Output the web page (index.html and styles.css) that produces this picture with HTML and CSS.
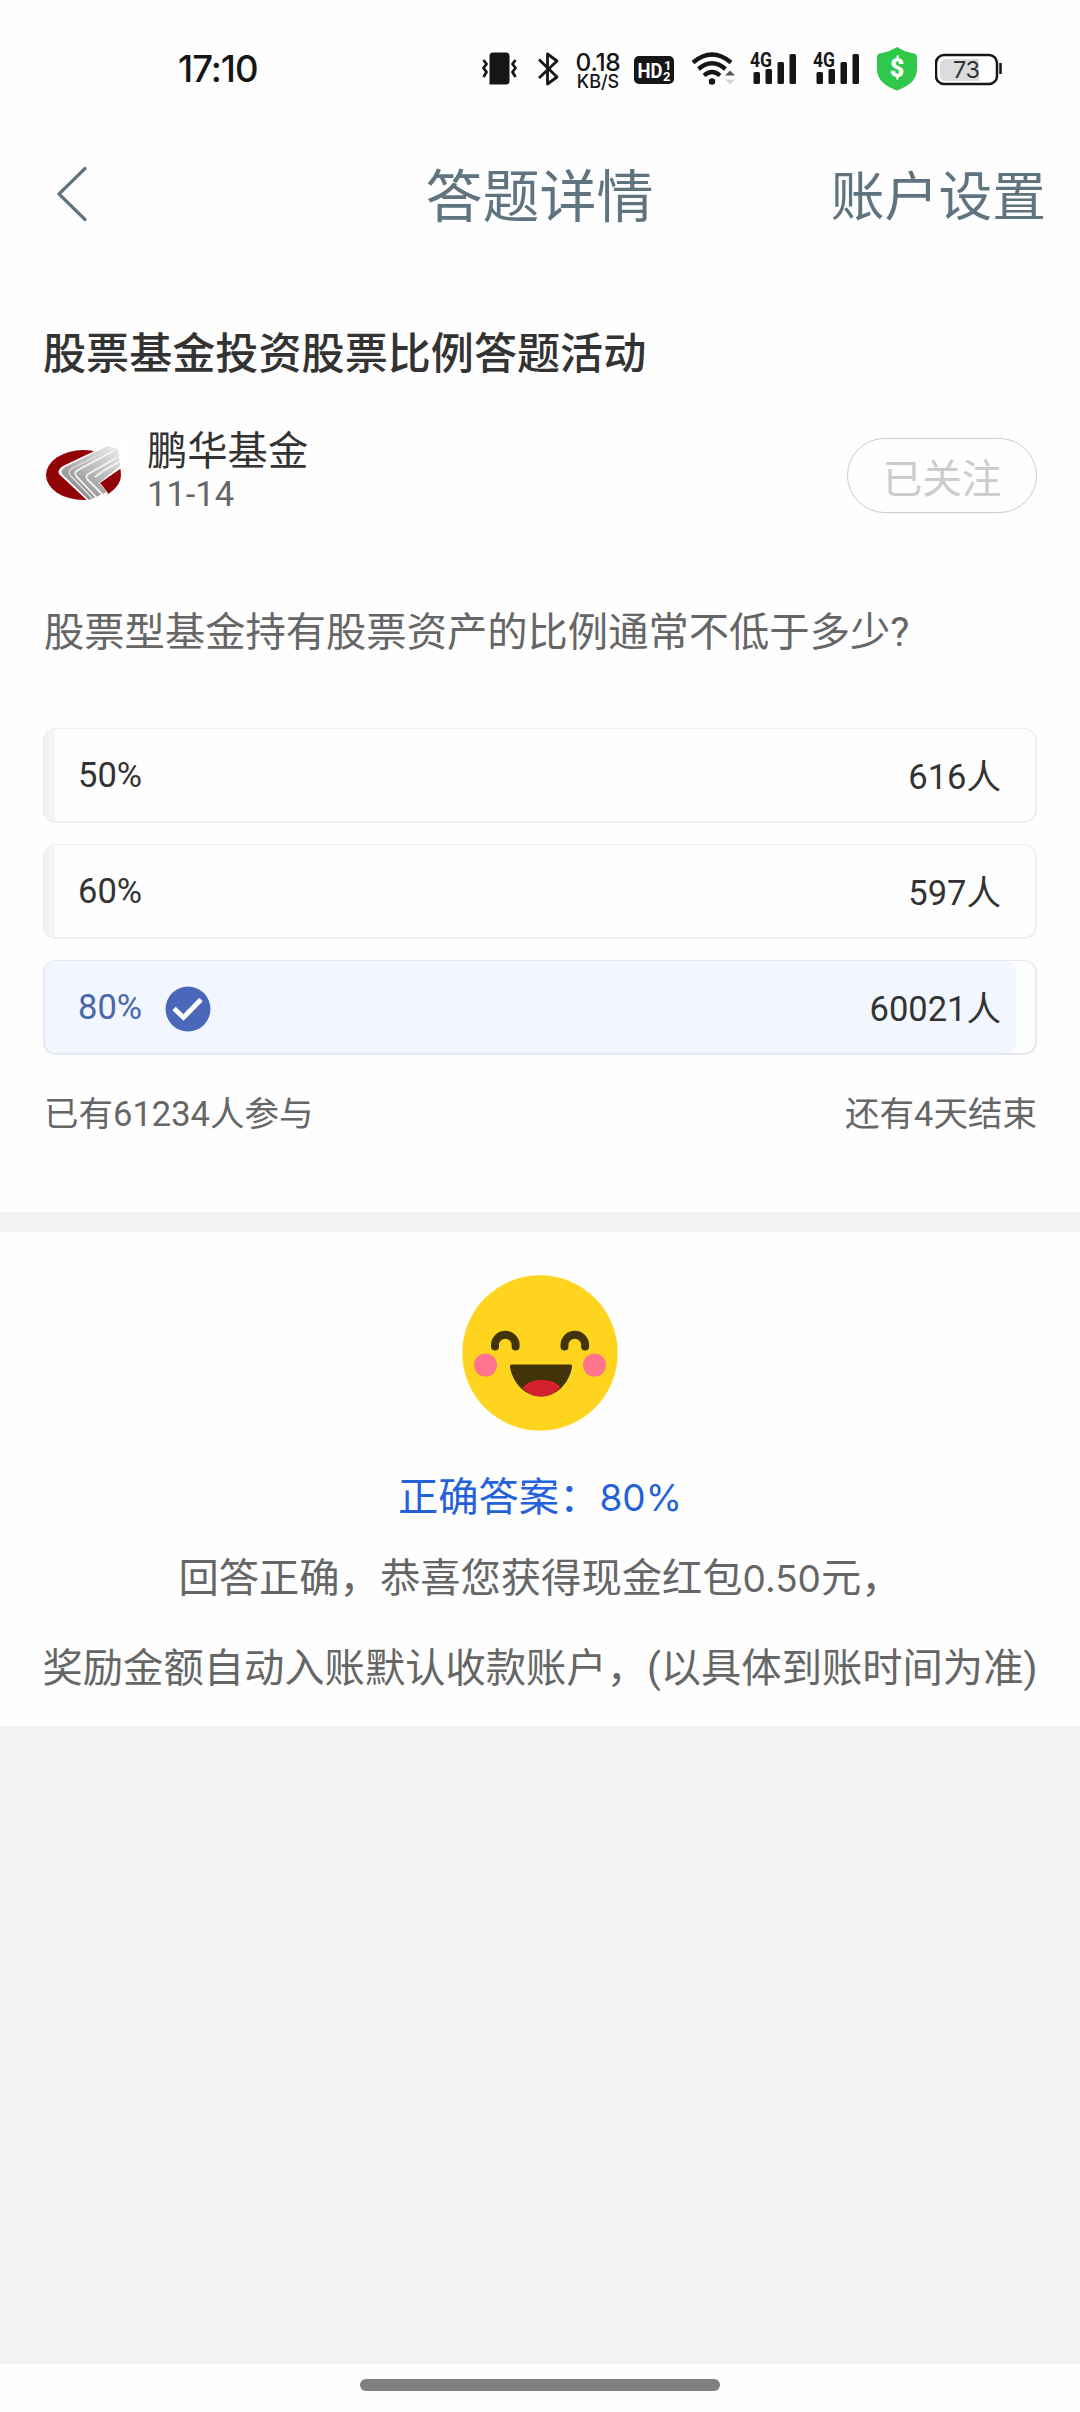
FILE: index.html
```html
<!DOCTYPE html>
<html lang="zh-CN">
<head>
<meta charset="utf-8">
<title>答题详情</title>
<link rel="stylesheet" href="styles.css">
</head>
<body>
<div class="screen">
  <header class="status">
    <span class="time">17:10</span>
    <div class="status-icons">
      <svg class="i-vibrate" width="36" height="44" viewBox="0 0 36 44"><path d="M11 5.500h13q3.500 0 3.500 3.500v25q0 3.500-3.500 3.500H7.500V9q0-3.500 3.500-3.500z" fill="#161616"/><path d="M1.500 13l3 4-3 4 3 4-3 5M33.500 13l-3 4 3 4-3 4 3 5" fill="none" stroke="#161616" stroke-width="2.800" stroke-linejoin="round"/></svg>
      <svg class="i-bt" width="22" height="44" viewBox="0 0 22 44"><path d="M1 12.500L19 30 9.500 37V7L19 14 1 31" fill="none" stroke="#161616" stroke-width="2.800" stroke-linejoin="round"/></svg>
      <div class="speed"><span class="speed-num">0.18</span><span class="speed-unit">KB/S</span></div>
      <svg class="i-hd" width="40" height="44" viewBox="0 0 40 44"><rect y="9" width="40" height="28" rx="5" fill="#161616"/><g fill="#fff" font-family="Roboto, sans-serif" font-weight="700"><text x="3.500" y="31" font-size="21" textLength="25" lengthAdjust="spacingAndGlyphs">HD</text><text x="30" y="23" font-size="13">1</text><text x="29" y="34" font-size="13">2</text></g></svg>
      <svg class="i-wifi" width="46" height="44" viewBox="0 0 46 44"><g fill="none" stroke="#161616" stroke-width="4.300"><path d="M2 15.500Q21 -.500 40 15.500"/><path d="M7.500 22Q21 10.500 34.500 22"/><path d="M13 28.500Q21 21.500 29 28.500"/></g><circle cx="21" cy="34.500" r="3.200" fill="#161616"/><path d="M34 28.500l5-5 5 5z" fill="#555"/><path d="M34 32.500l5 5 5-5z" fill="#d5d5d5"/></svg>
      <svg class="i-sig" width="47" height="44" viewBox="0 0 47 44"><g fill="#161616"><text x="0" y="19.500" font-family="Roboto, sans-serif" font-weight="700" font-size="20" textLength="22" lengthAdjust="spacingAndGlyphs">4G</text><rect x="3.500" y="25" width="6.500" height="12" rx="1.500"/><rect x="15.500" y="22" width="6.500" height="15" rx="1.500"/><rect x="27.500" y="15" width="6.500" height="22" rx="1.500"/><rect x="39.500" y="7" width="6.500" height="30" rx="1.500"/></g></svg>
      <svg class="i-sig2" width="47" height="44" viewBox="0 0 47 44"><g fill="#161616"><text x="0" y="19.500" font-family="Roboto, sans-serif" font-weight="700" font-size="20" textLength="22" lengthAdjust="spacingAndGlyphs">4G</text><rect x="3.500" y="25" width="6.500" height="12" rx="1.500"/><rect x="15.500" y="22" width="6.500" height="15" rx="1.500"/><rect x="27.500" y="15" width="6.500" height="22" rx="1.500"/><rect x="39.500" y="7" width="6.500" height="30" rx="1.500"/></g></svg>
      <svg class="i-shield" width="40" height="44" viewBox="0 0 40 44"><path d="M20 0Q28 5 37.500 6.500 40 7 40 9.500V22C40 34 30 40 20 43.500 10 40 0 34 0 22V9.500Q0 7 2.500 6.500 12 5 20 0z" fill="#2fc84b"/><text x="20" y="30" text-anchor="middle" fill="#fff" font-family="Roboto, sans-serif" font-weight="900" font-size="25">$</text></svg>
      <svg class="i-batt" width="68" height="44" viewBox="0 0 68 44"><rect x="1" y="8" width="61" height="29" rx="8" fill="#fff" stroke="#161616" stroke-width="2.500"/><path d="M11 12H44V34H11Q5 34 5 28V18Q5 12 11 12z" fill="#dcdcdc"/><path d="M65.500 16v11" stroke="#161616" stroke-width="2.500"/><text x="18" y="31" fill="#333" font-family="Inter, sans-serif" font-size="23.500" textLength="27">73</text></svg>
    </div>
  </header>

  <nav class="navbar">
    <svg class="back" width="30" height="56" viewBox="0 0 30 56"><path d="M28 2.500L2 28 28 53.500" fill="none" stroke="#607480" stroke-width="3.200" stroke-linecap="round"/></svg>
    <h1 class="nav-title">答题详情</h1>
    <span class="nav-action">账户设置</span>
  </nav>

  <main class="quiz">
    <h2 class="quiz-title">股票基金投资股票比例答题活动</h2>
    <div class="author">
      <svg class="logo" width="78" height="62" viewBox="0 0 78 62">
        <defs><linearGradient id="silver" x1="1" y1="0" x2="0.300" y2="1"><stop offset="0" stop-color="#ececec"/><stop offset=".5" stop-color="#bdbdbd"/><stop offset="1" stop-color="#858585"/></linearGradient></defs>
        <ellipse cx="38.500" cy="33" rx="37.500" ry="25" fill="#910306"/>
        <path d="M62 3H78V25L55 41 63 51 56 61H45L14 32Q12 28 18 24z" fill="#fff"/>
        <path d="M63 4L20 25Q14 29 18 33L44 58 62 50 54 41 75 24 73 7z" fill="url(#silver)"/>
        <path d="M70 8L33 28Q28 31 32 35L51 55M73 15L45 31Q39 34 43 38L57 52M74 20L58 29 50 35" fill="none" stroke="#f4f4f4" stroke-width="1.800"/>
        <path d="M67 6L27 26.500Q22 30 26 34L47 56" fill="none" stroke="#e3e3e3" stroke-width="1.200"/>
        <path d="M56 41L75.500 27Q77 39 64 50z" fill="#910306"/>
      </svg>
      <div class="author-text">
        <span class="author-name">鹏华基金</span>
        <span class="author-date">11-14</span>
      </div>
      <button class="follow">已关注</button>
    </div>
    <p class="question">股票型基金持有股票资产的比例通常不低于多少?</p>
    <ul class="options">
      <li class="option"><span class="fill" style="width:1%"></span><span class="label">50%</span><span class="count">616人</span></li>
      <li class="option"><span class="fill" style="width:1%"></span><span class="label">60%</span><span class="count">597人</span></li>
      <li class="option chosen"><span class="fill" style="width:98.1%"></span><span class="label">80%</span>
        <svg class="check" width="46" height="46" viewBox="0 0 46 46"><circle cx="23" cy="23" r="22.500" fill="#4a67b9"/><path d="M9 22.500L18.500 31.500 36 13.500" fill="none" stroke="#fff" stroke-width="4.800"/></svg>
        <span class="count">60021人</span></li>
    </ul>
    <div class="meta"><span>已有61234人参与</span><span>还有4天结束</span></div>
  </main>

  <section class="result">
    <svg class="smile" width="156" height="156" viewBox="0 0 156 156">
      <circle cx="78" cy="78" r="77.700" fill="#fed41f"/>
      <g fill="none" stroke="#41340b" stroke-width="8" stroke-linecap="round"><path d="M33 71.500V70a10.300 10.300 0 0 1 20.600 0v1.500M102.500 71.500V70a10.300 10.300 0 0 1 20.600 0v1.500"/></g>
      <circle cx="23.500" cy="90" r="11.500" fill="#ff738c"/><circle cx="132.500" cy="90" r="11.500" fill="#ff738c"/>
      <path d="M50 89.500H108Q110.500 89.500 110 92C107 109 94 121.500 79 121.500S51 109 48 92Q47.500 89.500 50 89.500z" fill="#41340b"/>
      <path d="M60.500 113.500C66 102.500 92 102.500 98.500 112.500Q90 121.500 79 121.500T60.500 113.500z" fill="#d5212f"/>
    </svg>
    <p class="answer">正确答案：<span class="latin">80%</span></p>
    <p class="note">回答正确，恭喜您获得现金红包<span class="latin">0.50</span>元，</p>
    <p class="note">奖励金额自动入账默认收款账户，(以具体到账时间为准)</p>
  </section>

  <footer class="gesture"><span class="handle"></span></footer>
</div>
</body>
</html>
```
FILE: styles.css
```css
* { box-sizing: border-box; margin: 0; padding: 0; }
body { background: #f3f3f3; font-family: Roboto, "Noto Sans CJK SC", sans-serif; font-weight: 400; color: #666; }
svg { display: block; flex: none; }
.screen { width: 1080px; height: 2412px; display: flex; flex-direction: column; background: #f3f3f3; overflow: hidden; white-space: nowrap; }

.status { height: 138px; padding: 47px 0 0 178px; display: flex; background: #fefefe; }
.time { width: 304px; font: 500 36.500px/44px Inter, sans-serif; letter-spacing: -1px; color: #161616; }
.status-icons { display: flex; height: 44px; }
.i-bt { margin-left: 20px; }
.speed { width: 46px; margin: 5px 0 0 15px; display: flex; flex-direction: column; align-items: center; color: #161616; font-family: Inter, sans-serif; font-weight: 500; }
.speed-num { font-size: 24.500px; line-height: 20px; letter-spacing: -.3px; }
.speed-unit { font-size: 18px; line-height: 19px; }
.i-hd { margin-left: 13px; }
.i-wifi { margin-left: 17px; }
.i-sig { margin-left: 13px; }
.i-sig2 { margin-left: 16px; }
.i-shield { margin-left: 17px; }
.i-batt { margin-left: 18px; }

.navbar { height: 114px; padding: 0 35px 0 57px; display: grid; grid-template-columns: 1fr auto 1fr; align-items: center; background: #fefefe; color: #607480; }
.back { margin-top: -2px; }
.nav-title { font-size: 57px; line-height: 80px; font-weight: 400; margin: 5px 0 0 -23px; }
.nav-action { justify-self: end; margin: 5px -1px 0 0; font-size: 53.800px; line-height: 80px; }

.quiz { height: 960px; padding: 73px 43px 0; background: #fefefe; }
.quiz-title { height: 60px; line-height: 60px; font-size: 43.100px; font-weight: 500; color: #333; }
.author { display: flex; height: 80px; margin-top: 44px; }
.logo { margin: 13px 0 0 2px; }
.author-text { margin: 1px 0 0 24px; display: flex; flex-direction: column; }
.author-name { height: 44px; line-height: 44px; font-size: 40.300px; color: #333; }
.author-date { height: 40px; line-height: 40px; font-size: 34.500px; }
.follow { margin: 9px 0 0 auto; width: 190px; height: 75px; border: 1px solid #ccc; border-radius: 38px; background: transparent; color: #ccc; font: 400 39.600px/71px "Noto Sans CJK SC", sans-serif; }
.question { height: 60px; line-height: 60px; margin: 94px 0 0 1px; font-size: 40.300px; }
.options { list-style: none; display: flex; flex-direction: column; gap: 21px; margin-top: 65px; }
.option { position: relative; height: 95px; display: flex; align-items: center; padding: 0 34px 0 33px; border: 2px solid #eee; border-top-width: 1px; border-radius: 13px; overflow: hidden; font-size: 34.500px; color: #333; }
.fill { position: absolute; left: 0; top: 0; bottom: 0; background: #f3f3f3; }
.label, .count, .check { position: relative; }
.count { margin: -3px 0 0 auto; }
.chosen { border-color: #e6eaf0; }
.chosen .fill { background: #f2f6fe; border-radius: 11px; }
.chosen .label { color: #4a67a9; }
.check { margin: 3px 0 0 23px; }
.meta { height: 50px; margin: 34px 0 0; padding: 0 0 0 1px; display: flex; justify-content: space-between; font-size: 34.500px; line-height: 50px; }

.result { height: 494px; margin-top: 20px; padding-top: 43px; display: flex; flex-direction: column; align-items: center; background: #fefefe; }
.answer { height: 60px; margin-top: 37px; font-size: 40.300px; line-height: 60px; color: #2462dc; }
.note { font-size: 40.300px; line-height: 60px; height: 60px; margin-top: 21px; }
.note + .note { margin-top: 30px; }
.latin { font-family: Inter, sans-serif; font-size: 37px; }

.gesture { height: 48px; margin-top: auto; background: #fefefe; display: flex; justify-content: center; padding-top: 15px; }
.handle { width: 360px; height: 12px; border-radius: 6px; background: #7f7f7f; }
```
